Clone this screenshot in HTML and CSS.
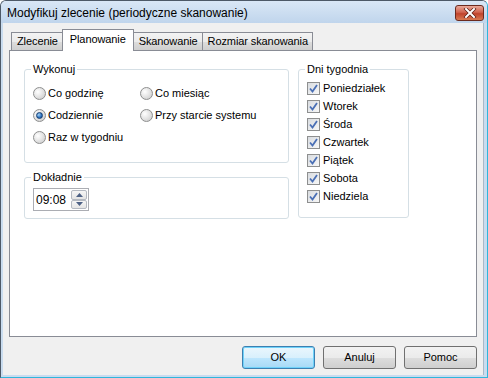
FILE: index.html
```html
<!DOCTYPE html>
<html lang="pl">
<head>
    <meta charset="UTF-8">
    <title>Modyfikuj zlecenie</title>
    <link rel="stylesheet" href="styles.css">
</head>
<body>
<div class="window">
    <!--pasek tytułu-->
    <div class="titlebar">
        <span class="title">Modyfikuj zlecenie (periodyczne skanowanie)</span>
        <span class="close-btn">
            <svg width="14" height="10" viewBox="0 0 14 10">
                <path d="M3 1 L11 9 M11 1 L3 9" stroke="#5a1d14" stroke-width="3.4" stroke-linecap="square"/>
                <path d="M3 1 L11 9 M11 1 L3 9" stroke="#fff" stroke-width="2" stroke-linecap="square"/>
            </svg>
        </span>
    </div>
    <div class="client">
        <div class="tabs">
            <div class="tab">Zlecenie</div>
            <div class="tab active">Planowanie</div>
            <div class="tab">Skanowanie</div>
            <div class="tab">Rozmiar skanowania</div>
        </div>
        <div class="panel">
            <div class="col-left">
                <fieldset class="group group-run">
                    <legend>Wykonuj</legend>
                    <div class="radio-grid">
                        <label class="opt"><span class="radio"></span>Co godzinę</label>
                        <label class="opt"><span class="radio"></span>Co miesiąc</label>
                        <label class="opt"><span class="radio checked"></span>Codziennie</label>
                        <label class="opt"><span class="radio"></span>Przy starcie systemu</label>
                        <label class="opt"><span class="radio"></span>Raz w tygodniu</label>
                    </div>
                </fieldset>
                <fieldset class="group group-time">
                    <legend>Dokładnie</legend>
                    <div class="time-box">
                        <span class="time-text">09:08</span>
                        <span class="spin">
                            <span class="spin-btn"><svg width="7" height="4" viewBox="0 0 7 4"><path d="M0 4 L3.5 0 L7 4 Z" fill="#4d6185"/></svg></span>
                            <span class="spin-btn"><svg width="7" height="4" viewBox="0 0 7 4"><path d="M0 0 L3.5 4 L7 0 Z" fill="#4d6185"/></svg></span>
                        </span>
                    </div>
                </fieldset>
            </div>
            <fieldset class="group group-days">
                <legend>Dni tygodnia</legend>
                <label class="chk-row"><span class="chk"><svg width="9" height="9" viewBox="0 0 9 9"><path d="M1 4.5 L3.5 7.5 L8 1" fill="none" stroke="#4a6fb5" stroke-width="1.8"/></svg></span>Poniedziałek</label>
                <label class="chk-row"><span class="chk"><svg width="9" height="9" viewBox="0 0 9 9"><path d="M1 4.5 L3.5 7.5 L8 1" fill="none" stroke="#4a6fb5" stroke-width="1.8"/></svg></span>Wtorek</label>
                <label class="chk-row"><span class="chk"><svg width="9" height="9" viewBox="0 0 9 9"><path d="M1 4.5 L3.5 7.5 L8 1" fill="none" stroke="#4a6fb5" stroke-width="1.8"/></svg></span>Środa</label>
                <label class="chk-row"><span class="chk"><svg width="9" height="9" viewBox="0 0 9 9"><path d="M1 4.5 L3.5 7.5 L8 1" fill="none" stroke="#4a6fb5" stroke-width="1.8"/></svg></span>Czwartek</label>
                <label class="chk-row"><span class="chk"><svg width="9" height="9" viewBox="0 0 9 9"><path d="M1 4.5 L3.5 7.5 L8 1" fill="none" stroke="#4a6fb5" stroke-width="1.8"/></svg></span>Piątek</label>
                <label class="chk-row"><span class="chk"><svg width="9" height="9" viewBox="0 0 9 9"><path d="M1 4.5 L3.5 7.5 L8 1" fill="none" stroke="#4a6fb5" stroke-width="1.8"/></svg></span>Sobota</label>
                <label class="chk-row"><span class="chk"><svg width="9" height="9" viewBox="0 0 9 9"><path d="M1 4.5 L3.5 7.5 L8 1" fill="none" stroke="#4a6fb5" stroke-width="1.8"/></svg></span>Niedziela</label>
            </fieldset>
        </div>
        <div class="buttons">
            <div class="btn default">OK</div>
            <div class="btn">Anuluj</div>
            <div class="btn">Pomoc</div>
        </div>
    </div>
</div>
</body>
</html>
```

FILE: styles.css
```css
body {
    margin: 0;
    padding: 0;
    width: 488px;
    height: 378px;
    overflow: hidden;
    font-family: "Liberation Sans", Arial, sans-serif;
    font-size: 11px;
    color: #000;
}

.window {
    width: 488px;
    height: 378px;
    box-sizing: border-box;
    border: 1px solid #4d5967;
    border-bottom-color: #2fb6dc;
    border-right-color: #2fb6dc;
    border-radius: 6px 6px 0 0;
    background: #c9dcef;
    display: flex;
    flex-direction: column;
}

.titlebar {
    height: 22px;
    display: flex;
    align-items: center;
    justify-content: space-between;
    padding: 0 3px 0 6px;
    background: linear-gradient(#d9e7f6, #c0d5ec);
    border-radius: 5px 5px 0 0;
}

.title {
    font-size: 12px;
    padding-top: 1px;
}

.close-btn {
    width: 27px;
    height: 14px;
    display: flex;
    align-items: center;
    justify-content: center;
    border: 1px solid #6b2a1f;
    border-radius: 3px;
    background: linear-gradient(#e9a99a, #d0634e 45%, #c0432c 55%, #d87a52);
    margin-top: 1px;
}

.client {
    flex: 1;
    margin: 0 3px 2px 2px;
    background: #f0f0f0;
    padding: 7px 6px 0 6px;
    border-right: 1px solid #a9b8c8;
}

.tabs {
    display: flex;
    align-items: flex-end;
    height: 21px;
    margin: 0 0 -1px 2px;
    position: relative;
    z-index: 1;
    letter-spacing: -0.1px;
}

.tab {
    height: 17px;
    line-height: 17px;
    padding: 0 4px 0 5px;
    border: 1px solid #898c95;
    border-bottom: none;
    border-right: none;
    background: linear-gradient(#f3f3f3, #ebebeb 50%, #dddddd 51%, #cfcfcf);
    margin-bottom: 1px;
}

.tab:last-child {
    border-right: 1px solid #898c95;
}

.tab.active {
    height: 21px;
    line-height: 18px;
    padding: 0 7px;
    background: #fff;
    margin-bottom: 0;
    border-right: 1px solid #898c95;
}

.tab.active + .tab {
    border-left: none;
}

.panel {
    height: 287px;
    box-sizing: border-box;
    background: #fff;
    border: 1px solid #898c95;
    padding: 12px 0 0 14px;
    display: flex;
    gap: 9px;
    align-items: flex-start;
}

.col-left {
    width: 265px;
    display: flex;
    flex-direction: column;
    gap: 8px;
}

.group {
    margin: 0;
    border: 1px solid #d5dfe5;
    border-radius: 3px;
    padding: 0 8px;
}

.group legend {
    padding: 0 2px;
    margin-left: -2px;
    line-height: 13px;
}

.group-run {
    padding-top: 6px;
    padding-bottom: 14px;
}

.radio-grid {
    display: grid;
    grid-template-columns: 107px 1fr;
    grid-auto-rows: 22px;
}

.opt {
    display: flex;
    align-items: center;
    gap: 2px;
}

.radio {
    width: 11px;
    height: 11px;
    border: 1px solid #8e8f8f;
    border-radius: 50%;
    background: radial-gradient(circle at 35% 35%, #ffffff, #e6e6e6 45%, #c6c6c6);
    display: flex;
    align-items: center;
    justify-content: center;
}

.radio.checked::after {
    content: "";
    width: 5px;
    height: 5px;
    border-radius: 50%;
    background: radial-gradient(circle at 35% 35%, #a6d4f7, #2a6fbd 60%, #1b4a8a);
    border: 1px solid #163d70;
}

.group-time {
    height: 42px;
    padding-top: 4px;
}

.time-box {
    height: 21px;
    border: 1px solid #abadb3;
    display: flex;
    align-items: center;
    justify-content: space-between;
    padding-left: 2px;
    box-sizing: content-box;
    width: 52px;
}

.time-text {
    font-size: 12px;
}

.spin {
    display: flex;
    flex-direction: column;
    width: 16px;
    height: 19px;
    margin-right: 1px;
}

.spin-btn {
    flex: 1;
    display: flex;
    align-items: center;
    justify-content: center;
    border: 1px solid #b4b9c1;
    border-radius: 2px;
    background: linear-gradient(#f6f6f6, #e4e4e4);
}

.group-days {
    width: 93px;
    height: 150px;
    padding-top: 3px;
}

.chk-row {
    height: 18px;
    display: flex;
    align-items: center;
    gap: 3px;
}

.chk {
    width: 11px;
    height: 11px;
    border: 1px solid #8e8f8f;
    background: linear-gradient(135deg, #d9dce0, #f7f7f7);
    display: flex;
    align-items: center;
    justify-content: center;
}

.buttons {
    display: flex;
    justify-content: flex-end;
    gap: 8px;
    margin-top: 9px;
}

.btn {
    width: 71px;
    height: 21px;
    line-height: 21px;
    text-align: center;
    border: 1px solid #707070;
    border-radius: 3px;
    background: linear-gradient(#f2f2f2, #ebebeb 50%, #dddddd 51%, #cfcfcf);
}

.btn.default {
    border-color: #3c7fb1;
    background: linear-gradient(#eaf6fd, #d9f0fc 50%, #bee6fd 51%, #a7d9f5);
    box-shadow: inset 0 0 0 1px #6fd2f9;
}
```
